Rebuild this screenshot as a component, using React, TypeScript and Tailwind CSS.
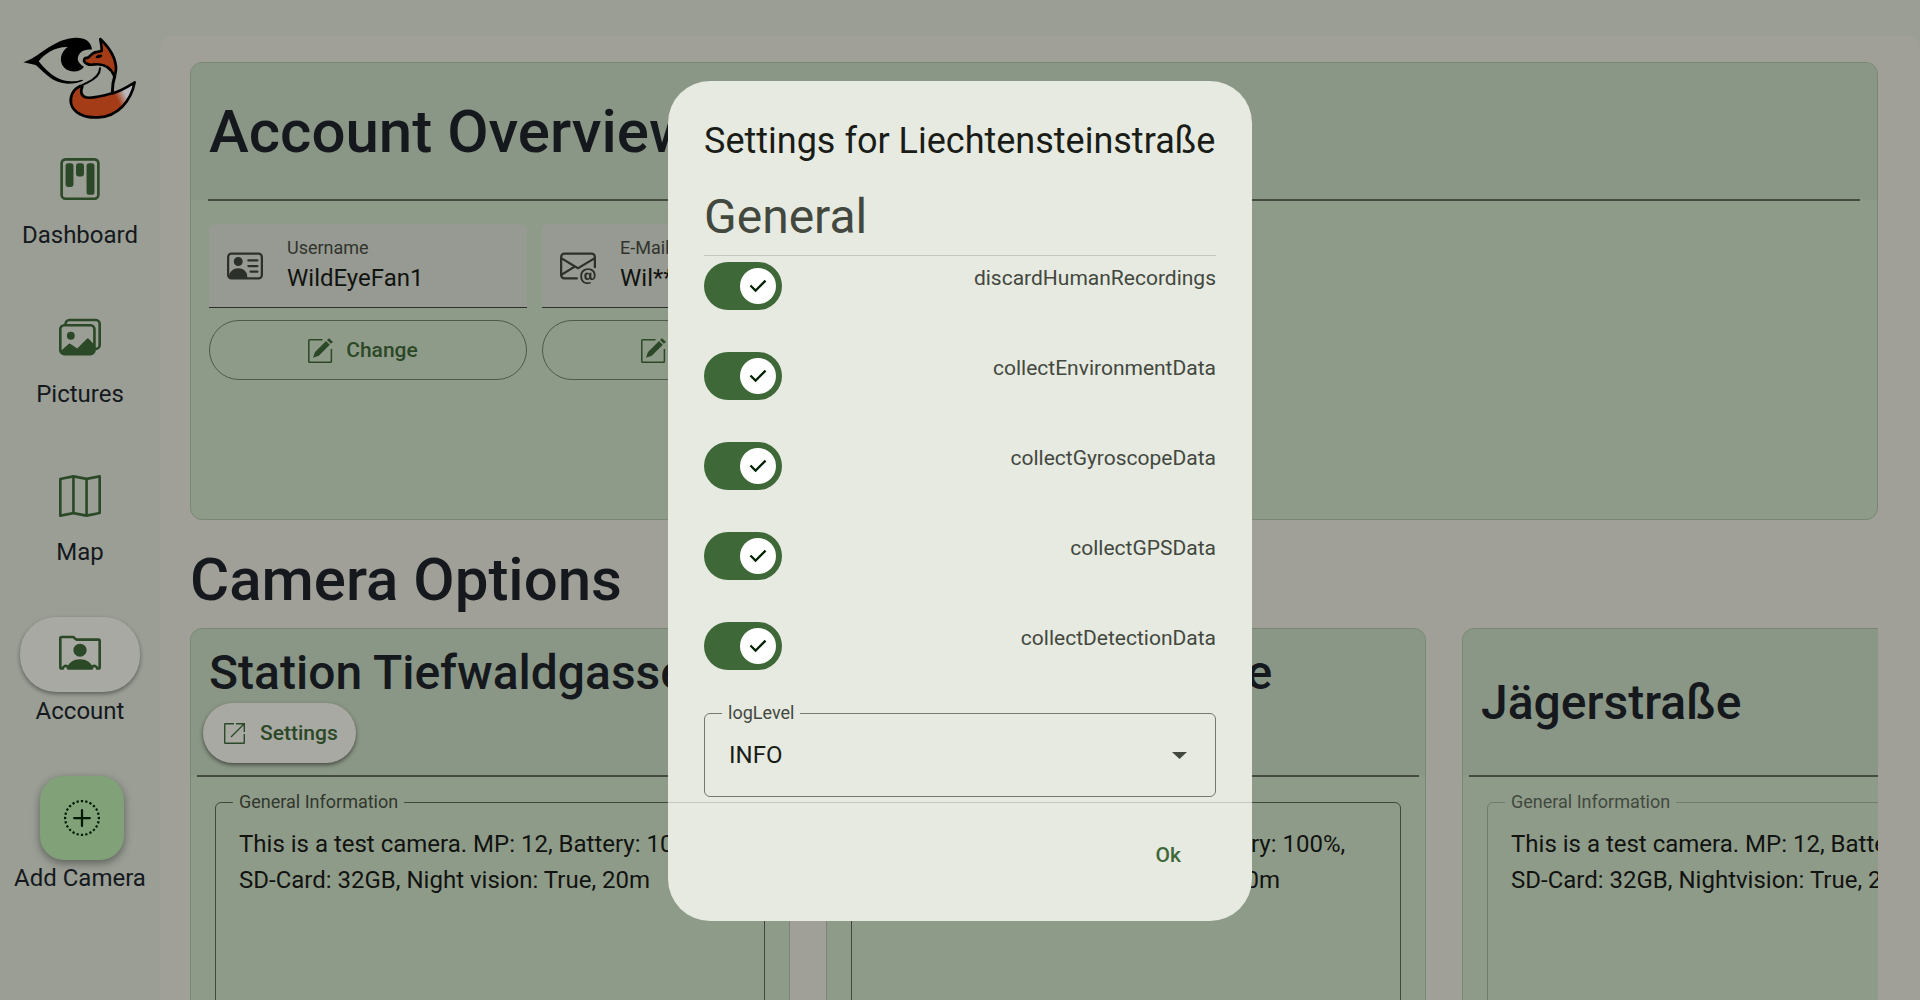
import React from "react";
import {
  BsKanban, BsImages, BsMap, BsPersonRolodex, BsPlusCircleDotted, BsPersonVcard, BsEnvelopeAt,
} from "react-icons/bs";

function FoxLogo() {
  return (
    <svg className="block h-[95px] w-[130px]" viewBox="0 0 390 285" fill="none">
      <defs>
        <linearGradient id="tail" x1="305" y1="205" x2="332" y2="192" gradientUnits="userSpaceOnUse">
          <stop stopColor="#a53c18" />
          <stop offset="1" stopColor="#b9b9bb" />
        </linearGradient>
      </defs>
      <path d="M25 97 C70 84 110 30 175 24 C205 21 228 32 231 58 C222 60 203 58 193 72 C183 88 190 100 207 110 C197 127 165 130 148 113 C130 94 137 66 158 51 C120 50 90 70 71 94 C90 118 115 143 145 151 C170 157 187 153 202 149 L204 152 C180 163 150 164 125 154 C98 143 78 117 62 105 Z" fill="#000" />
      <path d="M256 27 C284 54 304 85 303 119 C302 130 300 135 298 139 C285 105 255 100 232 104 C221 105 211 100 207 93 C207 86 210 83 217 84 C226 80 227 72 240 67 L260 63 C261 50 257 38 256 27Z" fill="#a53c18" stroke="#000" strokeWidth="8" strokeLinejoin="round" />
      <path d="M242 80 C249 73 257 72 262 76 C261 83 250 87 242 83Z" fill="#000" />
      <path d="M300 135 C295 150 292 167 292 188" stroke="#000" strokeWidth="9" />
      <path d="M196 168 C174 178 164 199 168 220 C173 246 205 265 250 262 C307 260 348 214 359 157 C335 172 317 184 291 190 C260 199 231 207 212 202 C197 196 196 183 202 170Z" fill="url(#tail)" stroke="#000" strokeWidth="8" strokeLinejoin="round" />
      <path d="M255 115 C255 134 238 148 217 158 C205 164 195 168 188 174" stroke="#000" strokeWidth="6" strokeLinecap="round" />
    </svg>
  );
}

function EditIcon() {
  return (
    <svg className="size-[25px]" viewBox="0 0 25 25" fill="none" stroke="currentColor">
      <path d="M14.5 1.8H1.6Q.8 1.8 .8 2.6V23.4Q.8 24.2 1.6 24.2H22.6Q23.4 24.2 23.4 23.4V11" strokeWidth="1.5" />
      <path d="M5 19.8 7 14 18 3 21.8 6.8 10.8 17.8Z M19 2 21 .2 25 4 22.8 5.8Z" fill="currentColor" stroke="none" />
    </svg>
  );
}

function OpenIcon() {
  return (
    <svg className="size-[21px]" viewBox="0 0 21 21" fill="none" stroke="currentColor" strokeWidth="1.4">
      <path d="M10 .7H1.3Q.7 .7 .7 1.3V19.7Q.7 20.3 1.3 20.3H19.7Q20.3 20.3 20.3 19.7V11M12 .7H20.3V9M20 1 7 14" />
    </svg>
  );
}

function NavItem({ icon: Icon, label, active = false }: { icon: React.ElementType; label: string; active?: boolean }) {
  return (
    <div className="flex h-[158.5px] flex-col items-center">
      <div className={active
        ? "flex h-[75px] w-[120px] items-center justify-center rounded-[36px] bg-[#a9a9a3] text-[#2b4827] shadow-[0_2px_4px_rgba(0,0,0,0.4)]"
        : "flex h-[75px] w-[120px] items-center justify-center text-[#2b4827]"}>
        <Icon className="size-[42px]" />
      </div>
      <div className="mt-px whitespace-nowrap text-2xl leading-9">{label}</div>
    </div>
  );
}

function Field({ icon: Icon, label, value }: { icon: React.ElementType; label: string; value: string }) {
  return (
    <div className="w-[318px]">
      <div className="flex h-[84px] items-center rounded-t-md border-b border-[#2c302a] bg-[#979a92] pl-[18px]">
        <Icon className="size-9 text-[#2c302a]" />
        <div className="ml-6">
          <div className="text-lg leading-6 text-[#30342d]">{label}</div>
          <div className="text-2xl leading-9 text-[#111310]">{value}</div>
        </div>
      </div>
      <div className="mt-3 flex h-[60px] items-center justify-center gap-[13px] rounded-full border border-[#50584c] pr-[10px] text-[#2b4827]">
        <EditIcon />
        <span className="pt-px text-[21px] font-medium">Change</span>
      </div>
    </div>
  );
}

function Camera({ name, lines, settings = false, faded = false }: { name: string; lines: string[]; settings?: boolean; faded?: boolean }) {
  return (
    <div className="h-[480px] w-[600px] shrink-0 overflow-hidden rounded-xl border border-[#788672] bg-[#8f9b89]">
      <div className="flex h-[148px] flex-col justify-center bg-[#8b9786]">
        <h2 className="pl-[18px] text-5xl leading-[60px] font-medium">{name}</h2>
        {settings && (
          <div className="ml-3 flex h-[60px] w-[153px] items-center gap-[15px] rounded-full bg-[#a9a9a3] pl-[21px] text-[#2b4827] shadow-[0_2px_4px_rgba(0,0,0,0.5)]">
            <OpenIcon />
            <span className="pt-[2px] text-[21px] font-medium">Settings</span>
          </div>
        )}
      </div>
      <div className="mx-1.5 -mt-0.5 h-0.5 bg-[#454b41]" />
      <fieldset className={faded
        ? "mx-6 mt-[13px] h-[420px] rounded-md border border-[#717b6c] pl-[6px]"
        : "mx-6 mt-[13px] h-[420px] rounded-md border border-[#40483c] pl-[6px]"}>
        <legend className={faded
          ? "ml-[11px] px-1.5 text-lg leading-6 text-[#41493e]"
          : "ml-[11px] px-1.5 text-lg leading-6 text-[#30372d]"}>General Information</legend>
        <div className="ml-[17px] mt-3 text-2xl leading-9 whitespace-nowrap text-[#111310]">
          {lines.map((l) => <div key={l}>{l}</div>)}
        </div>
      </fieldset>
    </div>
  );
}

function Toggle({ label }: { label: string }) {
  return (
    <div className="flex h-[90px] items-start justify-between">
      <div className="flex h-12 w-[78px] items-center justify-end rounded-full bg-[#3e6837] pr-1.5">
        <div className="flex size-9 items-center justify-center rounded-full bg-white">
          <svg className="size-6" viewBox="0 0 24 24" fill="#002201">
            <path d="M9.55 18.2 3.65 12.3 5.275 10.675 9.55 14.95 18.725 5.775 20.35 7.4Z" />
          </svg>
        </div>
      </div>
      <span className="text-[21px] leading-8 text-[#43483f]">{label}</span>
    </div>
  );
}

const toggles = ["discardHumanRecordings", "collectEnvironmentData", "collectGyroscopeData", "collectGPSData", "collectDetectionData"];

export default function App() {
  return (
    <div className="relative flex h-[1000px] w-[1920px] overflow-hidden bg-[#9a9e95] font-[Roboto,sans-serif] text-[#15191d]">
      <aside className="flex w-40 shrink-0 flex-col items-center pt-[30px]">
        <FoxLogo />
        <div className="mt-4 mb-px">
          <NavItem icon={BsKanban} label="Dashboard" />
          <NavItem icon={BsImages} label="Pictures" />
          <NavItem icon={BsMap} label="Map" />
          <NavItem icon={BsPersonRolodex} label="Account" active />
        </div>
        <div className="ml-1 flex size-[84px] shrink-0 items-center justify-center rounded-3xl bg-[#81a178] text-[#001a01] shadow-[0_3px_9px_rgba(0,0,0,0.4)]">
          <BsPlusCircleDotted className="size-9" />
        </div>
        <div className="text-2xl leading-9 whitespace-nowrap">Add Camera</div>
      </aside>
      <main className="mt-9 w-[1760px] overflow-hidden rounded-t-xl bg-[#a0a099] pt-[26px] pl-[30px]">
        <section className="h-[458px] w-[1688px] overflow-hidden rounded-xl border border-[#788672] bg-[#8f9b89]">
          <div className="flex h-[137px] items-center bg-[#8b9786] pl-[18px]">
            <h1 className="text-[60px] font-medium">Account Overview</h1>
          </div>
          <div className="mx-[17px] -mt-px h-0.5 bg-[#454b41]" />
          <div className="mt-[23px] flex gap-[15px] pl-[18px]">
            <Field icon={BsPersonVcard} label="Username" value="WildEyeFan1" />
            <Field icon={BsEnvelopeAt} label="E-Mail" value="Wil**********" />
          </div>
        </section>
        <h1 className="mt-[15px] text-[60px] leading-[90px] font-medium">Camera Options</h1>
        <div className="mt-[3px] flex w-[1688px] gap-9 overflow-hidden">
          <Camera name="Station Tiefwaldgasse" settings lines={["This is a test camera. MP: 12, Battery: 100%,", "SD-Card: 32GB, Night vision: True, 20m"]} />
          <Camera name="Liechtensteinstraße" settings lines={["This is a test camera. MP: 12, Battery: 100%,", "SD-Card: 32GB, Nightvision: True, 20m"]} />
          <Camera name="Jägerstraße" faded lines={["This is a test camera. MP: 12, Battery: 100%,", "SD-Card: 32GB, Nightvision: True, 20m"]} />
        </div>
      </main>

      <div role="dialog" className="absolute top-[81px] left-[668px] h-[840px] w-[584px] rounded-[42px] bg-[#e6eae0] pt-9">
        <div className="px-9">
          <h2 className="text-4xl leading-[48px] whitespace-nowrap text-[#1a1c18]">Settings for Liechtensteinstraße</h2>
          <h3 className="mt-[18px] h-[73px] border-b border-[#c2c8bc] text-5xl leading-[68px] text-[#43483f]">General</h3>
          <div className="mt-1.5">
            {toggles.map((t) => <Toggle key={t} label={t} />)}
          </div>
          <fieldset className="-mt-[11px] h-[96px] rounded-md border border-[#73796e]">
            <legend className="ml-[17px] px-1.5 text-lg leading-6 text-[#43483f]">logLevel</legend>
            <div className="flex items-center justify-between pt-3 pr-7 pl-6">
              <span className="text-2xl leading-9 text-[#1a1c18]">INFO</span>
              <svg className="h-[7px] w-[15px]" viewBox="0 0 15 7" fill="#43483f"><path d="M0 0h15L7.5 7z" /></svg>
            </div>
          </fieldset>
        </div>
        <div className="mt-[5px] flex justify-end border-t border-[#c2c8bc] pt-[22px] pr-[71px]">
          <span className="text-[21px] leading-[60px] font-medium text-[#3e6837]">Ok</span>
        </div>
      </div>
    </div>
  );
}
